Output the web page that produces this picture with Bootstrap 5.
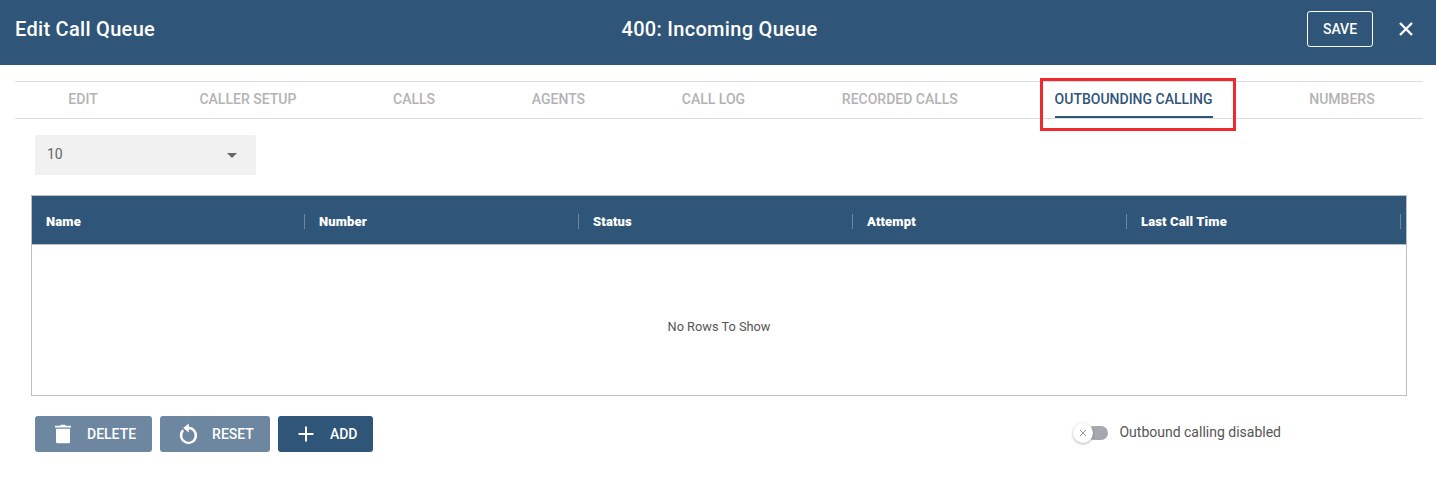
<!DOCTYPE html>
<html lang="en">
  <head>
    <meta charset="UTF-8" />
    <title>Edit Call Queue</title>
    <link href="https://cdn.jsdelivr.net/npm/bootstrap@5.3.0/dist/css/bootstrap.min.css" rel="stylesheet" />
    <style>
      body {
        font-family: Roboto, "Liberation Sans", sans-serif;
        background: #fff;
        overflow: hidden;
      }
      .top-bar {
        height: 65px;
        background: #2f5579;
        color: #fff;
        padding: 0 15px 7px;
      }
      .top-title {
        font-size: 20px;
        font-weight: 500;
        line-height: 1;
        letter-spacing: 0.3px;
        flex: 0 0 300px;
        margin: 0;
      }
      .top-center {
        flex: 0 0 809px;
        text-align: center;
      }
      .top-actions {
        flex: 1 1 0;
        padding-right: 7px;
        gap: 25px;
      }
      .btn-save {
        width: 66px;
        height: 36px;
        padding: 0;
        font-size: 14px;
        font-weight: 500;
        color: #fff;
        border: 1px solid #fff;
        border-radius: 3px;
      }
      .btn-save:hover {
        color: #fff;
      }
      .tab-strip {
        margin: 16px 13px 0 15px;
        height: 38px;
        border-top: 1px solid #ddd;
        border-bottom: 1px solid #ddd;
      }
      .tab-item {
        position: relative;
        font-size: 14px;
        font-weight: 500;
        line-height: 34px;
        color: #b3b3b3;
      }
      .tab-item.is-first {
        margin: 0 5px;
      }
      .tab-item.is-active {
        color: #2f5579;
        border-bottom: 2px solid #2f5579;
      }
      .red-box {
        position: absolute;
        left: -15px;
        right: -23px;
        top: -4px;
        height: 53px;
        border: 3px solid #ee2a2e;
      }
      .size-select {
        width: 221px;
        height: 40px;
        margin: 16px 0 20px 35px;
        padding: 0 12px 2px;
        background: #f1f1f1;
        border-radius: 3px 3px 0 0;
        font-size: 14px;
        color: #666;
      }
      .select-caret {
        width: 0;
        height: 0;
        border-left: 5px solid transparent;
        border-right: 5px solid transparent;
        border-top: 5px solid #666;
        margin-right: 7px;
        margin-top: 2px;
      }
      .grid-box {
        margin: 0 29px 0 31px;
        height: 201px;
        border: 1px solid #b9bdcc;
      }
      .grid-head {
        height: 49px;
        background: #2f5579;
        color: #fff;
        font-size: 13px;
        font-weight: 900;
        letter-spacing: 0.15px;
        padding-top: 2px;
        border-bottom: 1px solid #b9bdcc;
      }
      .grid-col {
        width: 274px;
        height: 15px;
        padding-left: 14.4px;
        line-height: 15px;
        border-right: 1px solid rgba(255, 255, 255, 0.3);
      }
      .grid-col:first-child {
        width: 272.6px;
        padding-left: 14px;
      }
      .grid-empty {
        height: 150px;
        font-size: 12.8px;
        color: #555;
        padding-top: 13px;
      }
      .foot-row {
        margin: 20px 0 0 35px;
      }
      .act-btn {
        height: 36px;
        padding: 0 16px 0 0;
        border: 0;
        border-radius: 3px;
        font-size: 14px;
        font-weight: 500;
        color: #fff;
        background: #2f5579;
      }
      .act-btn:hover {
        color: #fff;
        background: #2f5579;
      }
      .act-btn.is-muted {
        background: #6d87a1;
      }
      .act-btn.is-muted:hover {
        background: #6d87a1;
      }
      .act-ico {
        display: block;
        width: 24px;
        height: 24px;
        margin-left: 16px;
        margin-right: 12px;
      }
      .switch-zone {
        margin-left: 700px;
        color: #555;
        font-size: 14px;
        gap: 11px;
        padding-bottom: 3px;
      }
      .switch-track {
        position: relative;
        width: 35px;
        height: 14px;
        display: block;
      }
      .switch-bar {
        position: absolute;
        left: 14px;
        right: 0;
        top: 0;
        bottom: 0;
        background: #a7a7af;
        border-radius: 7px;
      }
      .switch-knob {
        position: absolute;
        left: 0;
        top: -3px;
        width: 20px;
        height: 20px;
        border-radius: 50%;
        background: #fff;
        box-shadow: 0 1px 3px rgba(0, 0, 0, 0.3);
      }
    </style>
  </head>
  <body>
    <header class="top-bar d-flex align-items-center">
      <h1 class="top-title">Edit Call Queue</h1>
      <h2 class="top-title top-center">400: Incoming Queue</h2>
      <div class="top-actions d-flex align-items-center justify-content-end">
        <button type="button" class="btn btn-save">SAVE</button>
        <svg width="16" height="16" viewBox="0 0 16 16" fill="none" stroke="#fff" stroke-width="2.4" aria-label="Close">
          <path d="M2 2 14 14M14 2 2 14" />
        </svg>
      </div>
    </header>

    <nav class="tab-strip d-flex justify-content-around">
      <span class="tab-item is-first">EDIT</span>
      <span class="tab-item">CALLER SETUP</span>
      <span class="tab-item">CALLS</span>
      <span class="tab-item">AGENTS</span>
      <span class="tab-item">CALL LOG</span>
      <span class="tab-item">RECORDED CALLS</span>
      <span class="tab-item is-active">OUTBOUNDING CALLING<span class="red-box"></span></span>
      <span class="tab-item">NUMBERS</span>
    </nav>

    <div class="size-select d-flex align-items-center justify-content-between">
      <span>10</span>
      <span class="select-caret"></span>
    </div>

    <div class="grid-box">
      <div class="grid-head d-flex align-items-center">
        <div class="grid-col">Name</div>
        <div class="grid-col">Number</div>
        <div class="grid-col">Status</div>
        <div class="grid-col">Attempt</div>
        <div class="grid-col">Last Call Time</div>
      </div>
      <div class="grid-empty d-flex align-items-center justify-content-center">No Rows To Show</div>
    </div>

    <div class="foot-row d-flex align-items-center">
      <div class="d-flex gap-2">
        <button type="button" class="btn act-btn is-muted d-flex align-items-center">
          <svg class="act-ico" viewBox="0 0 24 24" fill="#fff"><path d="M4 3.8h5l1-1h4l1 1h5v1.8H4zM5 6.8h14v12.9a1.6 1.6 0 0 1-1.6 1.6H6.6A1.6 1.6 0 0 1 5 19.7z" /></svg>
          DELETE
        </button>
        <button type="button" class="btn act-btn is-muted d-flex align-items-center">
          <svg class="act-ico" viewBox="0 0 24 24" fill="none" stroke="#fff" stroke-width="2.4"><path d="M7.2 8.2a7.4 7.4 0 1 0 5.3-2.2" /><path d="M12.8 1.4v9L7.2 5.9z" fill="#fff" stroke="none" /></svg>
          RESET
        </button>
        <button type="button" class="btn act-btn d-flex align-items-center">
          <svg class="act-ico" viewBox="0 0 24 24" fill="none" stroke="#fff" stroke-width="2"><path d="M12 4.5v15M4.5 12h15" /></svg>
          ADD
        </button>
      </div>
      <div class="switch-zone d-flex align-items-center">
        <span class="switch-track">
          <span class="switch-bar"></span>
          <span class="switch-knob d-flex align-items-center justify-content-center">
            <svg width="8" height="8" viewBox="0 0 8 8" fill="none" stroke="#999" stroke-width="1"><path d="M1 1 7 7M7 1 1 7" /></svg>
          </span>
        </span>
        <span>Outbound calling disabled</span>
      </div>
    </div>

    <script src="https://cdn.jsdelivr.net/npm/bootstrap@5.3.0/dist/js/bootstrap.bundle.min.js"></script>
  </body>
</html>
